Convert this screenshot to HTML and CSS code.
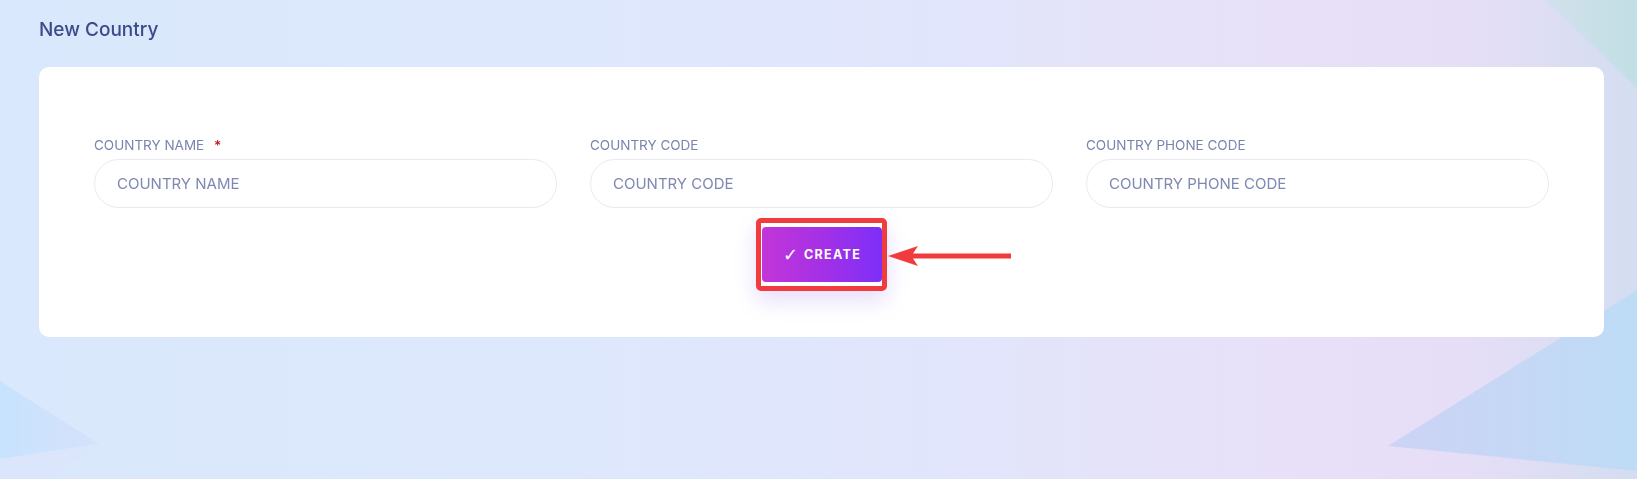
FILE: index.html
```html
<!DOCTYPE html>
<html>
<head>
  <title>New Country</title>
  <link rel="stylesheet" href="styles.css">
</head>
<body>
  <svg class="backdrop" viewBox="0 0 1637 479" preserveAspectRatio="none" aria-hidden="true">
    <defs>
      <linearGradient id="tealGrad" x1="0" y1="0" x2="1" y2="0">
        <stop offset="0" stop-color="#d3e0ec"/>
        <stop offset="1" stop-color="#c1dfe4"/>
      </linearGradient>
      <linearGradient id="leftGrad" x1="0" y1="0" x2="1" y2="0">
        <stop offset="0" stop-color="#c7e3fd"/>
        <stop offset="1" stop-color="#d6e1fb"/>
      </linearGradient>
      <linearGradient id="rightGrad" x1="0" y1="0" x2="1" y2="0">
        <stop offset="0" stop-color="#cdd3f5"/>
        <stop offset="1" stop-color="#bedcf6"/>
      </linearGradient>
    </defs>
    <polygon points="1545,0 1637,0 1637,88" fill="url(#tealGrad)"/>
    <polygon points="0,381 99,444 0,459" fill="url(#leftGrad)"/>
    <polygon points="0,459 99,444 50,479 0,479" fill="#dbe6fc"/>
    <polygon points="1388,446 1637,290 1637,471" fill="url(#rightGrad)"/>
  </svg>

  <main class="page">
    <h1 class="page-title">New Country</h1>

    <section class="card">
      <form class="country-form" onsubmit="return false">
        <div class="fields">
          <div class="field">
            <label for="countryName">COUNTRY NAME <span class="req">*</span></label>
            <input id="countryName" type="text" placeholder="COUNTRY NAME">
          </div>
          <div class="field">
            <label for="countryCode">COUNTRY CODE</label>
            <input id="countryCode" type="text" placeholder="COUNTRY CODE">
          </div>
          <div class="field">
            <label for="phoneCode">COUNTRY PHONE CODE</label>
            <input id="phoneCode" type="text" placeholder="COUNTRY PHONE CODE">
          </div>
        </div>

        <div class="actions">
          <div class="highlight">
            <button type="submit" class="create-btn"><span class="tick">&#10003;</span>CREATE</button>
            <!-- annotation arrow pointing at the button -->
            <svg class="pointer" width="124" height="24" viewBox="0 0 124 24">
              <path d="M0 12 L30 2 L25 9.5 L123 9.5 L123 14.5 L25 14.5 L30 22 Z" fill="#f03c3c"/>
            </svg>
          </div>
        </div>
      </form>
    </section>
  </main>
</body>
</html>
```

FILE: styles.css
```css
* { box-sizing: border-box; }
html, body { margin: 0; height: 100%; }
body {
  font-family: "Inter", "Liberation Sans", sans-serif;
  background: linear-gradient(90deg, #d9e8fc 0%, #dee8fc 35%, #e2e5fb 60%, #e8e0f8 80%, #e5def6 90%, #d4ddf1 100%);
  overflow: hidden;
}
.backdrop { position: fixed; top: 0; left: 0; width: 100%; height: 100%; z-index: 0; }

.page { position: relative; z-index: 1; padding: 0 33px 0 39px; }
.page-title {
  margin: 0;
  padding-top: 16px;
  height: 67px;
  font-size: 19px;
  line-height: 28px;
  font-weight: 500;
  color: #3c4a8c;
}

.card { background: #fff; border-radius: 10px; padding: 68px 55px 46px; }

.fields { display: grid; grid-template-columns: repeat(3, 1fr); column-gap: 33px; }
.field label {
  display: block;
  font-size: 13.5px;
  line-height: 20px;
  color: #7a84ad;
  margin-bottom: 4px;
}
.field .req { color: #c0181f; margin-left: 6px; font-weight: 600; }
.field input {
  width: 100%;
  height: 49px;
  border: 1px solid #e8eaf2;
  border-radius: 25px;
  padding: 0 22px;
  font-family: inherit;
  font-size: 15px;
  color: #3c4a8c;
  outline: none;
  background: #fff;
}
.field input::placeholder { color: #7f88b2; }

.actions { display: flex; justify-content: center; margin-top: 10px; }
.highlight {
  position: relative;
  border: 5px solid #f03c3c;
  border-radius: 5px;
  padding: 4px 0 4px 1px;
  box-shadow: 0 10px 22px rgba(130, 70, 240, 0.18);
}
.create-btn {
  display: flex;
  align-items: center;
  justify-content: center;
  width: 120px;
  height: 55px;
  border: none;
  border-radius: 4px;
  background: linear-gradient(90deg, #c236d8 0%, #a530e6 50%, #7d2ff8 100%);
  color: #fff;
  font-family: inherit;
  font-size: 12.5px;
  font-weight: 700;
  letter-spacing: 1.3px;
  cursor: pointer;
}
.tick { font-family: "DejaVu Sans", sans-serif; font-weight: 400; font-size: 18px; line-height: 1; margin-right: 6px; letter-spacing: 0; }
.pointer { position: absolute; left: calc(100% + 6px); top: 21px; }
```
